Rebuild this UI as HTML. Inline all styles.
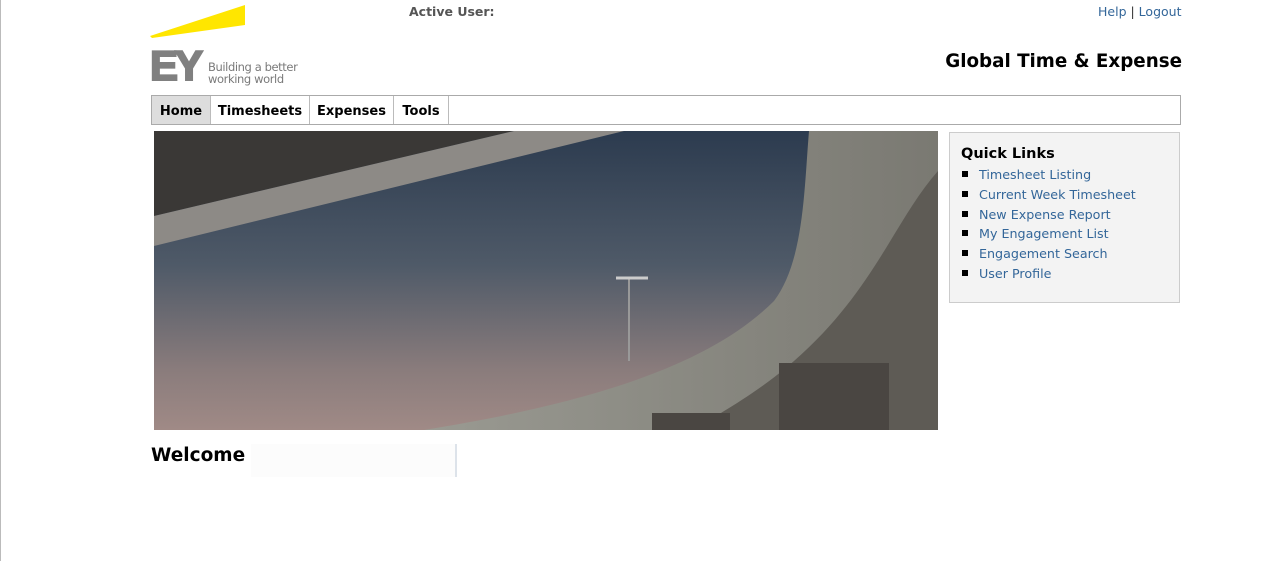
<!DOCTYPE html>
<html><head><meta charset="utf-8"><style>
body{margin:0;width:1280px;height:561px;background:#fff;font-family:"DejaVu Sans",Verdana,sans-serif;position:relative;overflow:hidden}
.abs{position:absolute}
a{color:#336699;text-decoration:none}
.b{display:inline-block;width:6px;height:6px;background:#000;margin:0 11px 2px 0}
</style></head><body>
<div class="abs" style="left:0;top:0;width:1px;height:561px;background:#bbb"></div>
<svg class="abs" style="left:150px;top:3px" width="100" height="36"><polygon points="0,33 95,2 95,22 2,35" fill="#ffe600"/></svg>
<div class="abs" style="left:150px;top:45px;font:bold 42px 'Liberation Sans',sans-serif;color:#808080;letter-spacing:-3px;line-height:42px;-webkit-text-stroke:2px #808080">EY</div>
<div class="abs" style="left:208px;top:61px;font-size:11.5px;line-height:12px;color:#7a7a7a;letter-spacing:-0.4px">Building a better<br>working world</div>
<div class="abs" style="left:409px;top:4px;font-size:12.5px;font-weight:bold;color:#555">Active User:</div>
<div class="abs" style="left:1098px;top:4px;font-size:12.5px;color:#333"><a>Help</a> | <a>Logout</a></div>
<div class="abs" style="right:98px;top:51px;font-size:18.3px;font-weight:bold;color:#000">Global Time &amp; Expense</div>
<div class="abs" style="left:151px;top:95px;width:1028px;height:28px;border:1px solid #aaa;display:flex;font-size:13px;font-weight:bold">
<div style="background:#ddd;width:58px;text-align:center;line-height:32px;border-right:1px solid #bbb">Home</div>
<div style="width:98px;text-align:center;line-height:32px;border-right:1px solid #bbb">Timesheets</div>
<div style="width:83px;text-align:center;line-height:32px;border-right:1px solid #bbb">Expenses</div>
<div style="width:54px;text-align:center;line-height:32px;border-right:1px solid #bbb">Tools</div>
</div>
<svg class="abs" style="left:154px;top:131px" width="784" height="299" viewBox="0 0 784 299">
<defs><linearGradient id="sky" x1="0" y1="0" x2="0" y2="1"><stop offset="0" stop-color="#2c3b4f"/><stop offset="0.45" stop-color="#4f5a68"/><stop offset="0.8" stop-color="#8a7c7c"/><stop offset="1" stop-color="#a08a86"/></linearGradient>
<linearGradient id="ramp" x1="0" y1="0" x2="1" y2="0"><stop offset="0" stop-color="#9a9a92"/><stop offset="1" stop-color="#7a7972"/></linearGradient></defs>
<rect width="784" height="299" fill="url(#sky)"/>
<polygon points="0,0 360,0 0,85" fill="#3a3836"/>
<polygon points="0,85 360,0 470,0 0,115" fill="#8d8a86"/>
<path d="M655,0 L784,0 L784,299 L270,299 C450,270 560,230 620,170 C650,130 650,60 655,0 Z" fill="url(#ramp)"/>
<path d="M784,40 C740,90 720,160 640,230 C600,265 560,285 540,299 L784,299 Z" fill="#5e5b55"/>
<rect x="625" y="232" width="110" height="67" fill="#4a4642"/>
<rect x="498" y="282" width="78" height="17" fill="#4a4642"/>
<line x1="475" y1="148" x2="475" y2="230" stroke="#999" stroke-width="2"/>
<line x1="462" y1="147" x2="494" y2="147" stroke="#ccc" stroke-width="3"/>
</svg>
<div class="abs" style="left:949px;top:132px;width:229px;height:169px;background:#f3f3f3;border:1px solid #ccc">
<div style="margin:12px 0 0 11px;font-size:14.5px;font-weight:bold;line-height:18px">Quick Links</div>
<div style="margin:2px 0 0 12px;font-size:12.7px;line-height:19.8px">
<div><span class="b"></span><a>Timesheet Listing</a></div>
<div><span class="b"></span><a>Current Week Timesheet</a></div>
<div><span class="b"></span><a>New Expense Report</a></div>
<div><span class="b"></span><a>My Engagement List</a></div>
<div><span class="b"></span><a>Engagement Search</a></div>
<div><span class="b"></span><a>User Profile</a></div>
</div></div>
<div class="abs" style="left:151px;top:445px;font-size:18.5px;font-weight:bold">Welcome</div>
<div class="abs" style="left:251px;top:444px;width:204px;height:33px;background:#fcfcfc;border-right:2px solid #dde3ea"></div>
</body></html>
